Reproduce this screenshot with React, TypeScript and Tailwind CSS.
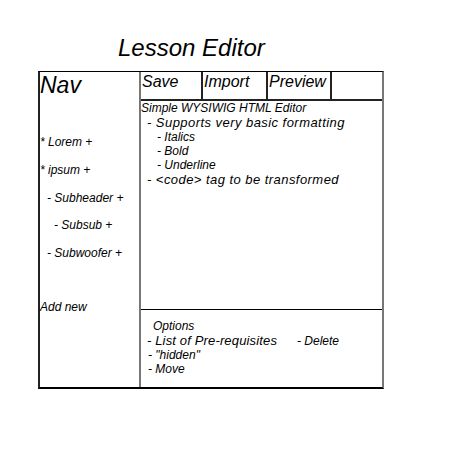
import React from "react";

export default function App() {
  return (
    <div className="w-[450px] h-[450px] bg-white text-black italic font-['Liberation_Sans',Arial,sans-serif]">
      <div className="pt-[34px] pl-[118px] text-[24px] leading-[28px]">Lesson Editor</div>
      <div className="ml-[38px] mt-[9px] w-[346px] h-[318px] flex border-t border-t-black border-l-2 border-l-[#222] border-r-2 border-r-[#777] border-b-2 border-b-black">
        <div className="w-[101px] border-r-2 border-r-[#777] flex flex-col text-[12px] leading-[14px]">
          <div className="text-[23px] leading-[24px] pl-[0px] pt-[1px]">Nav</div>
          <div className="mt-[38px]">* Lorem +</div>
          <div className="mt-[14px]">* ipsum +</div>
          <div className="mt-[14px] pl-[7px]">- Subheader +</div>
          <div className="mt-[13px] pl-[14px]">- Subsub +</div>
          <div className="mt-[14px] pl-[7px]">- Subwoofer +</div>
          <div className="mt-[40px]">Add new</div>
        </div>
        <div className="flex-1 flex flex-col">
          <div className="h-[29px] flex border-b-2 border-b-[#222] text-[16px] leading-[18px]">
            <div className="w-[62px] border-r-2 border-r-[#222] pl-[1px] pt-[1px]">Save</div>
            <div className="w-[65px] border-r-2 border-r-[#222] pl-[1px] pt-[1px]">Import</div>
            <div className="w-[64px] border-r-2 border-r-[#222] pl-[1px] pt-[1px]">Preview</div>
          </div>
          <div className="flex-1 text-[12px] leading-[14px]">
            <div>Simple WYSIWIG HTML Editor</div>
            <div className="pl-[6px] mt-[1px] text-[13px] tracking-[0.45px]">- Supports very basic formatting</div>
            <div className="pl-[16px]">- Italics</div>
            <div className="pl-[16px]">- Bold</div>
            <div className="pl-[16px]">- Underline</div>
            <div className="pl-[6px] mt-[1px] text-[13px] tracking-[0.45px]">- &lt;code&gt; tag to be transformed</div>
          </div>
          <div className="h-[78px] border-t border-t-black text-[12px] leading-[14px] pt-[9px]">
            <div className="pl-[12px]">Options</div>
            <div className="pl-[6px] mt-[1px] flex">
              <span className="w-[150px] text-[13px] tracking-[0.15px]">- List of Pre-requisites</span>
              <span>- Delete</span>
            </div>
            <div className="pl-[7px]">- "hidden"</div>
            <div className="pl-[7px]">- Move</div>
          </div>
        </div>
      </div>
    </div>
  );
}
